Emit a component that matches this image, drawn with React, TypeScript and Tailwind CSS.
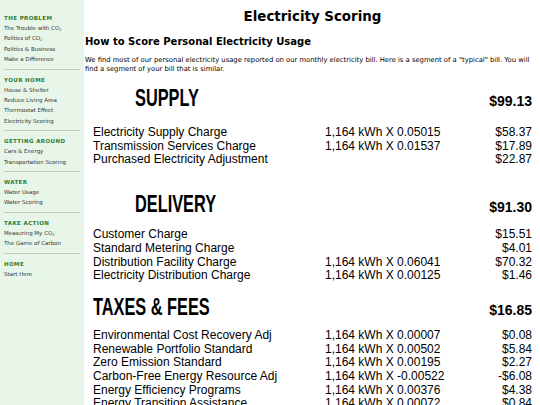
import React from 'react';

type NavGroup = { title: string; items: React.ReactNode[] };

const co2 = (
  <>
    CO<sub className="text-[3.5px]">2</sub>
  </>
);

const nav: NavGroup[] = [
  {
    title: 'THE PROBLEM',
    items: [<>The Trouble with {co2}</>, <>Politics of {co2}</>, 'Politics & Business', 'Make a Difference'],
  },
  {
    title: 'YOUR HOME',
    items: ['House & Shelter', 'Reduce Living Area', 'Thermostat Effect', 'Electricity Scoring'],
  },
  { title: 'GETTING AROUND', items: ['Cars & Energy', 'Transportation Scoring'] },
  { title: 'WATER', items: ['Water Usage', 'Water Scoring'] },
  { title: 'TAKE ACTION', items: [<>Measuring My {co2}</>, 'The Game of Carbon'] },
  { title: 'HOME', items: ['Start Here'] },
];

type Line = { label: string; calc?: string; amount: string };
type Section = { name: string; total: string; indent: boolean; head: string; rows: string; lines: Line[] };

const sections: Section[] = [
  {
    name: 'SUPPLY',
    total: '$99.13',
    indent: true,
    head: '',
    rows: 'mt-[13px]',
    lines: [
      { label: 'Electricity Supply Charge', calc: '1,164 kWh X 0.05015', amount: '$58.37' },
      { label: 'Transmission Services Charge', calc: '1,164 kWh X 0.01537', amount: '$17.89' },
      { label: 'Purchased Electricity Adjustment', amount: '$22.87' },
    ],
  },
  {
    name: 'DELIVERY',
    total: '$91.30',
    indent: true,
    head: 'mt-[27px]',
    rows: 'mt-[9px]',
    lines: [
      { label: 'Customer Charge', amount: '$15.51' },
      { label: 'Standard Metering Charge', amount: '$4.01' },
      { label: 'Distribution Facility Charge', calc: '1,164 kWh X 0.06041', amount: '$70.32' },
      { label: 'Electricity Distribution Charge', calc: '1,164 kWh X 0.00125', amount: '$1.46' },
    ],
  },
  {
    name: 'TAXES & FEES',
    total: '$16.85',
    indent: false,
    head: 'mt-[14px]',
    rows: 'mt-[7px]',
    lines: [
      { label: 'Environmental Cost Recovery Adj', calc: '1,164 kWh X 0.00007', amount: '$0.08' },
      { label: 'Renewable Portfolio Standard', calc: '1,164 kWh X 0.00502', amount: '$5.84' },
      { label: 'Zero Emission Standard', calc: '1,164 kWh X 0.00195', amount: '$2.27' },
      { label: 'Carbon-Free Energy Resource Adj', calc: '1,164 kWh X -0.00522', amount: '-$6.08' },
      { label: 'Energy Efficiency Programs', calc: '1,164 kWh X 0.00376', amount: '$4.38' },
      { label: 'Energy Transition Assistance', calc: '1,164 kWh X 0.00072', amount: '$0.84' },
    ],
  },
];

const Sidebar = () => (
  <aside className="w-[84px] shrink-0 bg-[#e8f5e9] px-[4px] pt-[13px] font-['DejaVu_Sans',sans-serif]">
    {nav.map((g, i) => (
      <div key={g.title}>
        {i > 0 && <div className="mb-[5px] mt-[4px] h-px bg-[#c2cbc3]" />}
        <div className="text-[5.5px] font-bold tracking-[0.4px] leading-[10px] text-[#2e7d32]">{g.title}</div>
        {g.items.map((it, j) => (
          <div key={j} className="text-[5.5px] leading-[10.4px] text-[#333]">
            {it}
          </div>
        ))}
      </div>
    ))}
  </aside>
);

const BillSection = ({ s }: { s: Section }) => (
  <div className={s.head}>
    <div className="flex items-baseline justify-between">
      <div className={`${s.indent ? 'pl-[42px]' : ''}`}>
        <span className="inline-block origin-left scale-x-[0.71] font-['Liberation_Sans',sans-serif] text-[23px] font-bold leading-[20px] text-black">
          {s.name}
        </span>
      </div>
      <div className="font-['Liberation_Sans',sans-serif] text-[14px] font-bold leading-[18px]">{s.total}</div>
    </div>
    <div className={`${s.rows} font-['Liberation_Sans',sans-serif] text-[12px] leading-[13.7px] text-black`}>
      {s.lines.map((l) => (
        <div key={l.label} className="grid grid-cols-[232px_1fr_auto]">
          <span>{l.label}</span>
          <span>{l.calc ?? ''}</span>
          <span className="text-right">{l.amount}</span>
        </div>
      ))}
    </div>
  </div>
);

export default function App() {
  return (
    <div className="flex h-[405px] w-[540px] overflow-hidden bg-white">
      <Sidebar />
      <main className="flex-1 pl-[1px] font-['DejaVu_Sans',sans-serif] text-black">
        <h1 className="pt-[8px] text-center text-[13.4px] font-bold leading-[18px]">Electricity Scoring</h1>
        <h2 className="mt-[9px] text-[10px] font-bold leading-[14px]">How to Score Personal Electricity Usage</h2>
        <p className="mt-[7px] pr-[5px] text-[6.8px] leading-[9px]">
          We find most of our personal electricity usage reported on our monthly electricity bill. Here is a segment of
          a "typical" bill. You will find a segment of your bill that is similar.
        </p>
        <div className="mt-[14px] pl-[8px] pr-[8px]">
          {sections.map((s) => (
            <BillSection key={s.name} s={s} />
          ))}
        </div>
      </main>
    </div>
  );
}
